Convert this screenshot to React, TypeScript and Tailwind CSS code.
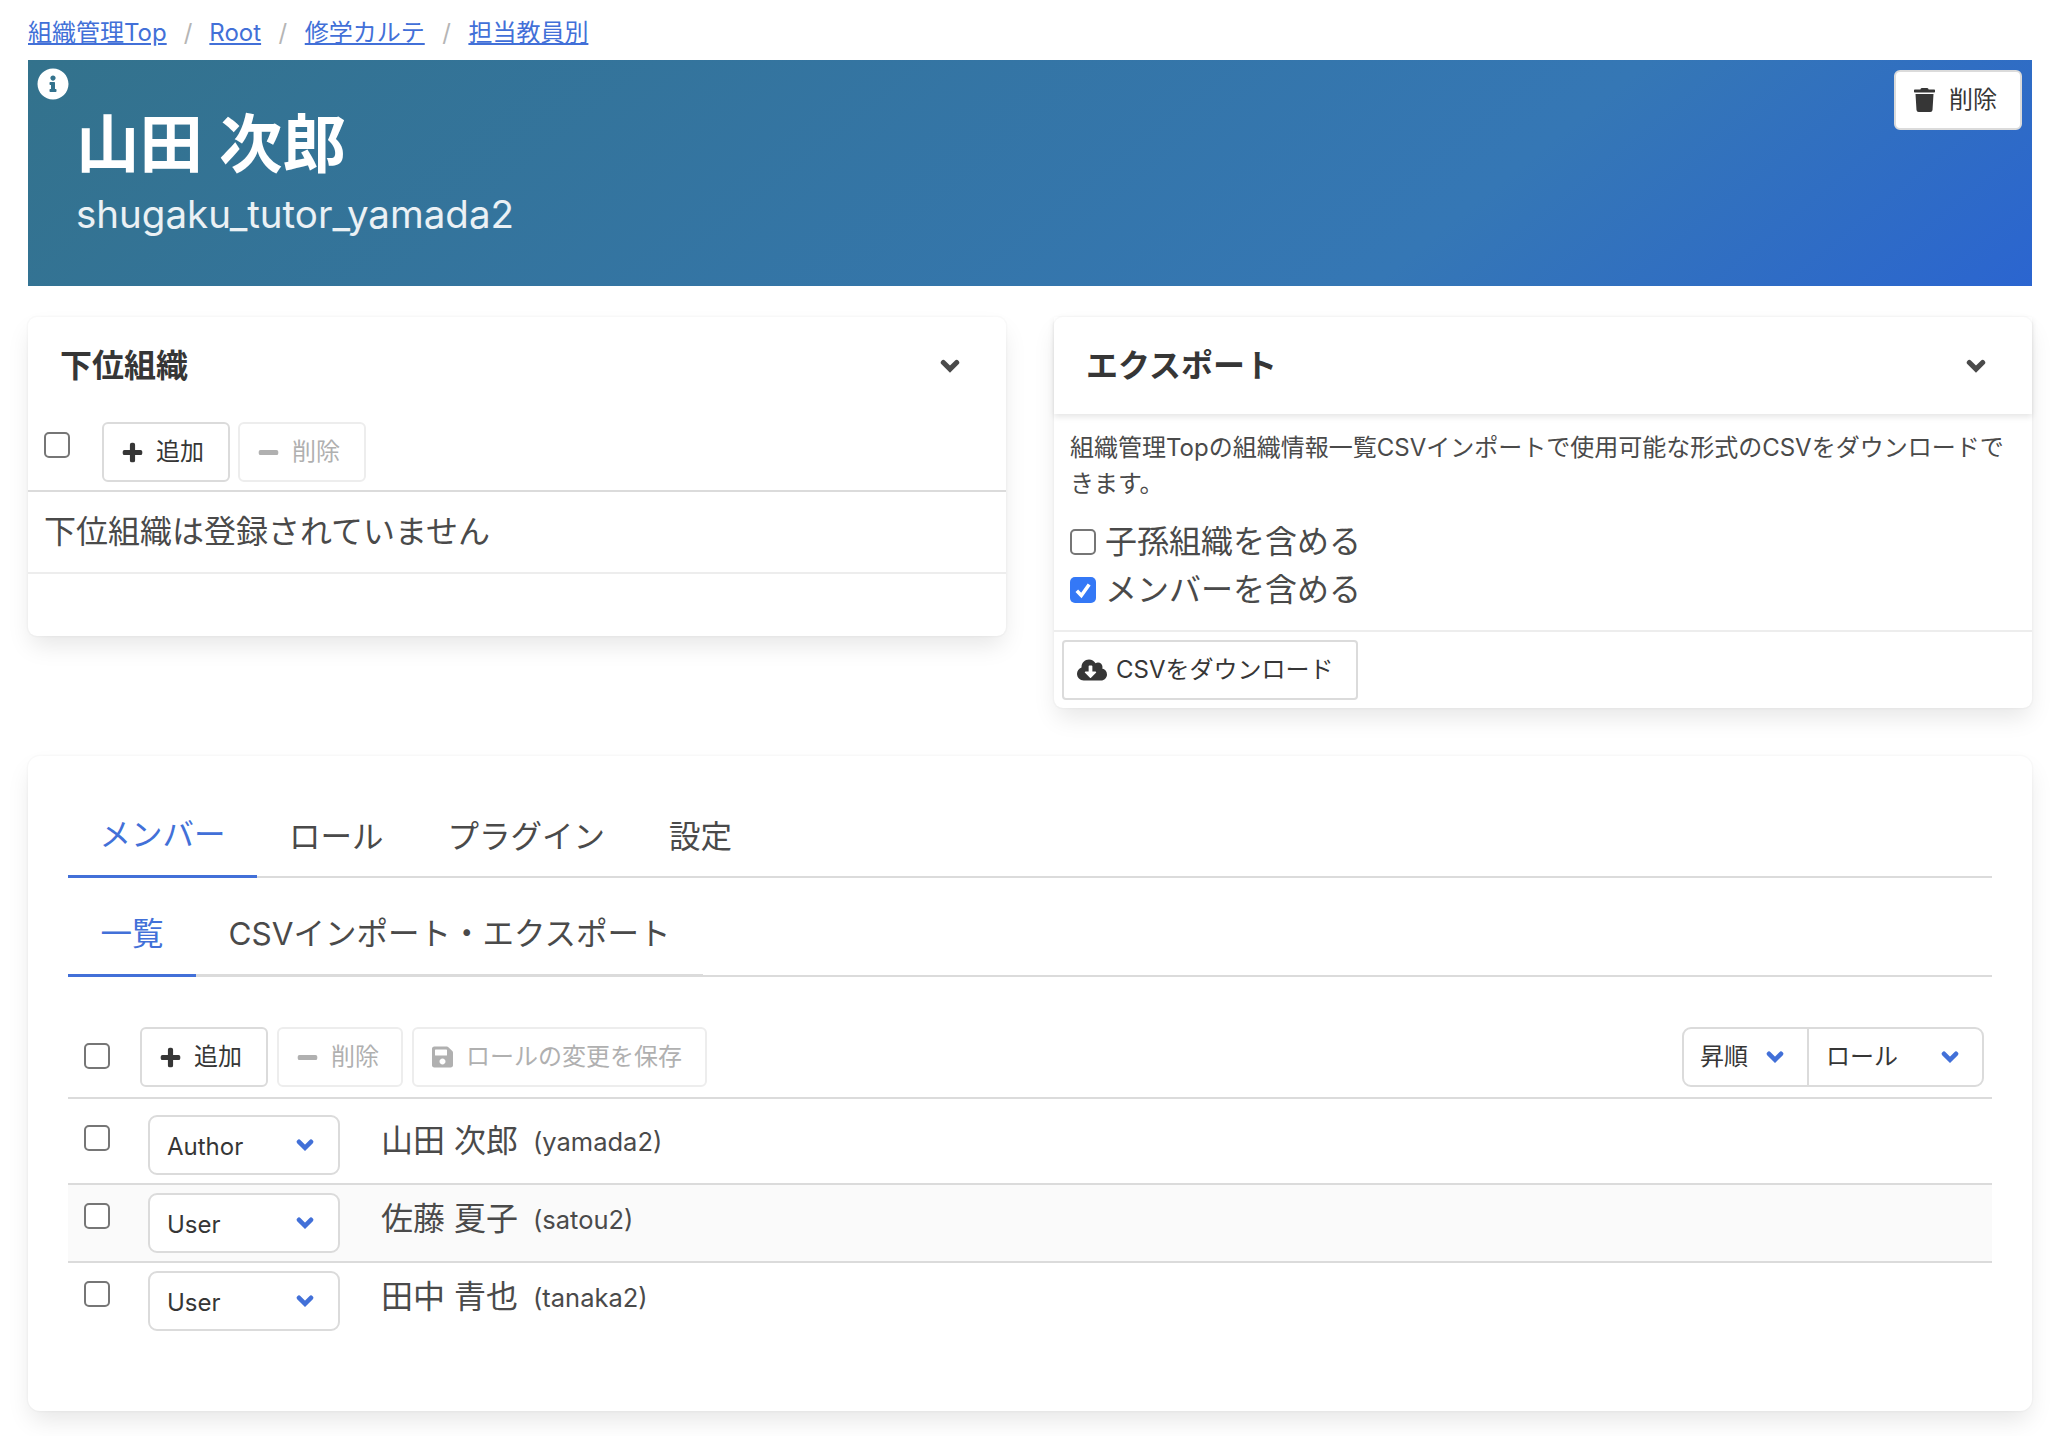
import { FaInfoCircle, FaTrash, FaPlus, FaMinus, FaSave, FaCloudDownloadAlt } from 'react-icons/fa'

const font = { fontFamily: '"Inter", "Noto Sans CJK JP", sans-serif' }

function Chevron({ className }: { className: string }) {
  return (
    <svg viewBox="0 0 18 14" className={className} fill="none" stroke="currentColor" strokeWidth="4.6" strokeLinecap="round">
      <path d="M3 3.8 9 9.8 15 3.8" />
    </svg>
  )
}

function Checkbox() {
  return <input type="checkbox" readOnly className="block w-[26px] h-[26px] shrink-0 appearance-none rounded-[5px] border-[2px] border-[#767676] bg-white" />
}

function CheckedBox() {
  return (
    <span className="-mt-[1px] flex w-[26px] h-[26px] shrink-0 items-center justify-center rounded-[5px] bg-[#3478f6]">
      <svg viewBox="0 0 16 16" className="w-[22px] h-[22px]" fill="none" stroke="#fff" strokeWidth="2.6">
        <path d="M3.5 8.5 6.8 12 12.5 4" />
      </svg>
    </span>
  )
}

function ToolButton({ icon, label, disabled = false, className = '' }: { icon: React.ReactNode; label: string; disabled?: boolean; className?: string }) {
  return (
    <button
      className={
        'flex h-[60px] items-center rounded-[6px] border-[2px] bg-white pl-[18px] text-[24px] ' +
        (disabled ? 'border-[#ededed] text-[#b0b0b0] ' : 'border-[#dbdbdb] text-[#363636] ') +
        className
      }
    >
      {icon}
      <span>{label}</span>
    </button>
  )
}

function CardHead({ title }: { title: string }) {
  return (
    <div className="flex h-[97px] items-center justify-between pl-[32px] pr-[46px]">
      <span className="text-[32px] font-bold text-[#363636]">{title}</span>
      <Chevron className="w-[20px] h-[16px] text-[#4a4a4a]" />
    </div>
  )
}

function RoleSelect({ value }: { value: string }) {
  return (
    <div className="flex h-[60px] w-[192px] shrink-0 items-center justify-between rounded-[9px] border-[2px] border-[#dbdbdb] bg-white pl-[17px] pr-[24px] text-[24px] text-[#363636]">
      <span className="mt-[4px]">{value}</span>
      <Chevron className="w-[18px] h-[14px] text-[#4270d8]" />
    </div>
  )
}

function MemberRow({ name, id, role, striped = false }: { name: string; id: string; role: string; striped?: boolean }) {
  return (
    <div className={'flex h-[78px] items-start border-b-[2px] border-[#dbdbdb] pt-[14px] last:border-b-0 ' + (striped ? 'bg-[#fafafa]' : '')}>
      <div className="ml-[16px] mt-[4px]">
        <Checkbox />
      </div>
      <div className="ml-[38px] -mt-[6px]">
        <RoleSelect value={role} />
      </div>
      <div className="ml-[41px] flex items-center -mt-[4px] h-[48px]">
        <span className="text-[32px] text-[#4a4a4a]">{name}</span>
        <span className="ml-[15px] mt-[3px] text-[25.5px] text-[#4a4a4a]">{id}</span>
      </div>
    </div>
  )
}

export default function App() {
  const shadow = 'shadow-[0_12px_24px_-3px_rgba(10,10,10,0.1),0_0_0_1.5px_rgba(10,10,10,0.02)]'
  const plus = <FaPlus strokeWidth={30} className="mr-[13px] w-[21px] h-[21px]" />
  const minus = <FaMinus strokeWidth={30} className="mr-[13px] w-[21px] h-[21px]" />
  return (
    <div className="min-h-[1436px] bg-white pl-[28px] pr-[30px] pt-[14px]" style={font}>
      {/* Breadcrumb */}
      <nav className="flex h-[38px] items-center text-[24px] text-[#b5b5b5]">
        <a className="text-[#4270d8] underline">組織管理Top</a>
        <span className="mx-[17px]">/</span>
        <a className="text-[#4270d8] underline">Root</a>
        <span className="mx-[17.5px]">/</span>
        <a className="text-[#4270d8] underline">修学カルテ</a>
        <span className="mx-[17.5px]">/</span>
        <a className="text-[#4270d8] underline">担当教員別</a>
      </nav>

      {/* Hero */}
      <header className="relative mt-[8px] h-[226px] bg-[linear-gradient(141deg,#33728c_0%,#3577b5_71%,#2b65d0_100%)] pl-[48px] pt-[48px]">
        <FaInfoCircle className="absolute left-[9px] top-[8px] w-[32px] h-[32px] text-white" />
        <h1 className="text-[63.5px] leading-[72px] font-semibold text-white">山田 次郎</h1>
        <p className="mt-[7px] text-[38.5px] leading-[54px] text-white/90">shugaku_tutor_yamada2</p>
        <button className="absolute right-[10px] top-[10px] flex h-[60px] w-[128px] items-center rounded-[6px] border-[2px] border-[#dbdbdb] bg-white pl-[18px] text-[24px] text-[#363636]">
          <FaTrash className="mr-[14px] w-[21px] h-[24px]" />
          削除
        </button>
      </header>

      {/* Cards */}
      <div className="mt-[31px] flex items-start gap-[48px]">
        <section className={'flex-1 rounded-[9px] bg-white ' + shadow}>
          <CardHead title="下位組織" />
          <div className="flex h-[78px] items-start border-b-[2px] border-[#dbdbdb] pt-[8px]">
            <div className="ml-[16px] mt-[10px]">
              <Checkbox />
            </div>
            <div className="ml-[32px] flex gap-[8px]">
              <ToolButton icon={plus} label="追加" className="w-[128px]" />
              <ToolButton disabled icon={minus} label="削除" className="w-[128px]" />
            </div>
          </div>
          <div className="flex h-[82px] items-center border-b-[2px] border-[#ededed] pl-[16px] text-[32px] text-[#4a4a4a]">
            下位組織は登録されていません
          </div>
          <div className="h-[62px]" />
        </section>

        <section className={'flex-1 rounded-[9px] bg-white ' + shadow}>
          <div className="shadow-[0_3px_6px_rgba(10,10,10,0.1)]">
            <CardHead title="エクスポート" />
          </div>
          <div className="border-b-[2px] border-[#ededed] px-[16px] pt-[16px] pb-[16px]">
            <p className="text-[24px] leading-[36px] text-[#4a4a4a]">
              組織管理Topの組織情報一覧CSVインポートで使用可能な形式のCSVをダウンロードできます。
            </p>
            <label className="mt-[16px] flex h-[48px] items-center gap-[9px] text-[32px] text-[#4a4a4a]">
              <Checkbox />
              子孫組織を含める
            </label>
            <label className="flex h-[48px] items-center gap-[9px] text-[32px] text-[#4a4a4a]">
              <CheckedBox />
              メンバーを含める
            </label>
          </div>
          <div className="px-[8px] py-[8px]">
            <button className="flex h-[60px] w-[296px] items-center rounded-[4px] border-[2px] border-[#dbdbdb] bg-white pl-[13px] text-[24px] text-[#363636]">
              <FaCloudDownloadAlt className="mr-[9px] w-[30px] h-[24px]" />
              CSVをダウンロード
            </button>
          </div>
        </section>
      </div>

      {/* Members */}
      <section className={'mt-[48px] h-[655px] rounded-[12px] bg-white px-[40px] pt-[42px] ' + shadow}>
        <div className="flex h-[80px] border-b-[2px] border-[#dbdbdb] text-[31.5px] text-[#4a4a4a]">
          <a className="flex h-[80px] items-center border-b-[3px] border-[#4270d8] px-[31.5px] pb-[3px] text-[#4270d8]">メンバー</a>
          <a className="flex h-[80px] items-center px-[32px] pb-[3px]">ロール</a>
          <a className="flex h-[80px] items-center px-[32px] pb-[3px]">プラグイン</a>
          <a className="flex h-[80px] items-center px-[32px] pb-[3px]">設定</a>
        </div>
        <div className="mt-[19px] flex h-[80px] border-b-[2px] border-[#dbdbdb] text-[31.5px] text-[#4a4a4a]">
          <a className="flex h-[80px] items-center border-b-[3px] border-[#4270d8] px-[32.5px] pb-[3px] text-[#4270d8]">一覧</a>
          <a className="flex h-[80px] items-center border-b-[3px] border-[#dbdbdb] px-[32.5px] pb-[3px]">CSVインポート・エクスポート</a>
        </div>

        <div className="mt-[50px] flex h-[72px] items-start justify-between border-b-[2px] border-[#dbdbdb]">
          <div className="flex items-start">
            <div className="ml-[16px] mt-[16px]">
              <Checkbox />
            </div>
            <div className="ml-[30px] flex gap-[9px]">
              <ToolButton icon={plus} label="追加" className="w-[128px]" />
              <ToolButton disabled icon={minus} label="削除" className="w-[126px]" />
              <ToolButton disabled icon={<FaSave className="mr-[13px] w-[21px] h-[24px]" />} label="ロールの変更を保存" className="w-[295px]" />
            </div>
          </div>
          <div className="mr-[8px] flex h-[60px] w-[302px] rounded-[9px] border-[2px] border-[#dbdbdb] text-[24px] text-[#363636]">
            <div className="flex w-[125px] items-center justify-between border-r-[2px] border-[#dbdbdb] pl-[16px] pr-[23px]">
              <span>昇順</span>
              <Chevron className="w-[18px] h-[14px] text-[#4270d8]" />
            </div>
            <div className="flex flex-1 items-center justify-between pl-[17px] pr-[23px]">
              <span>ロール</span>
              <Chevron className="w-[18px] h-[14px] text-[#4270d8]" />
            </div>
          </div>
        </div>

        <div className="flex flex-col pt-[8px]">
          <MemberRow name="山田 次郎" id="(yamada2)" role="Author" />
          <MemberRow name="佐藤 夏子" id="(satou2)" role="User" striped />
          <MemberRow name="田中 青也" id="(tanaka2)" role="User" />
        </div>
      </section>
    </div>
  )
}
